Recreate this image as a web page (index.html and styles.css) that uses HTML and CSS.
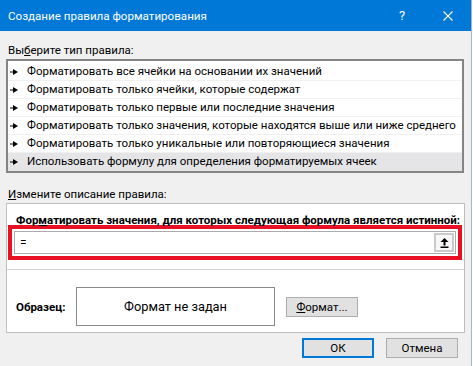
FILE: index.html
```html
<!DOCTYPE html>
<html lang="ru">
<head>
<meta charset="utf-8">
<link rel="stylesheet" href="styles.css">
</head>
<body>
<div class="dialog">
  <div class="titlebar">
    <div class="title">Создание правила форматирования</div>
    <div class="capbtn help">?</div>
    <div class="capbtn close">
      <svg width="10" height="10" viewBox="0 0 10 10"><path d="M0.5 0.5L9.5 9.5M9.5 0.5L0.5 9.5" stroke="#fff" stroke-width="1.1" fill="none"/></svg>
    </div>
  </div>
  <div class="content">
    <div class="label">Вы<u>б</u>ерите тип правила:</div>
    <div class="listbox">
      <div class="row"><svg class="arr" width="8" height="6" viewBox="0 0 8 6"><path d="M0 2.5h3v1H0z M3 0l5 3L3 6z"/></svg>Форматировать все ячейки на основании их значений</div>
      <div class="row"><svg class="arr" width="8" height="6" viewBox="0 0 8 6"><path d="M0 2.5h3v1H0z M3 0l5 3L3 6z"/></svg>Форматировать только ячейки, которые содержат</div>
      <div class="row"><svg class="arr" width="8" height="6" viewBox="0 0 8 6"><path d="M0 2.5h3v1H0z M3 0l5 3L3 6z"/></svg>Форматировать только первые или последние значения</div>
      <div class="row"><svg class="arr" width="8" height="6" viewBox="0 0 8 6"><path d="M0 2.5h3v1H0z M3 0l5 3L3 6z"/></svg>Форматировать только значения, которые находятся выше или ниже среднего</div>
      <div class="row"><svg class="arr" width="8" height="6" viewBox="0 0 8 6"><path d="M0 2.5h3v1H0z M3 0l5 3L3 6z"/></svg>Форматировать только уникальные или повторяющиеся значения</div>
      <div class="row selected"><svg class="arr" width="8" height="6" viewBox="0 0 8 6"><path d="M0 2.5h3v1H0z M3 0l5 3L3 6z"/></svg>Использовать формулу для определения форматируемых ячеек</div>
    </div>
    <div class="label label2"><u>И</u>змените описание правила:</div>
    <div class="panel">
      <div class="heading">Фор<u>м</u>атировать значения, для которых следующая формула является истинной:</div>
      <div class="redbox">
        <div class="input">
          <span class="value">=</span>
          <div class="refbtn">
            <svg width="9" height="10" viewBox="0 0 9 10"><path d="M4.5 0L8.5 4H5.5V7.5H3.5V4H0.5Z" fill="#000"/><rect x="0.5" y="8.5" width="8" height="1.5" fill="#000"/></svg>
          </div>
        </div>
      </div>
      <div class="sep"></div>
      <div class="sample">
        <div class="samplelabel">Образец:</div>
        <div class="preview">Формат не задан</div>
        <div class="btn fmtbtn"><u>Ф</u>ормат...</div>
      </div>
    </div>
    <div class="buttons">
      <div class="btn ok">ОК</div>
      <div class="btn cancel">Отмена</div>
    </div>
  </div>
</div>
</body>
</html>
```

FILE: styles.css
```css
html, body {
  margin: 0;
  padding: 0;
  background: #ffffff;
}
body {
  font-family: Roboto, "Noto Sans", sans-serif;
  font-size: 11.5px;
  color: #000;
}
u {
  text-decoration: underline;
  text-underline-offset: 1px;
}
.dialog {
  width: 472px;
  height: 366px;
  box-sizing: border-box;
  background: #f0f0f0;
  border-right: 1px solid #9fb7d2;
}
.titlebar {
  height: 31px;
  background: #0078d7;
  color: #fff;
  display: flex;
  align-items: center;
}
.title {
  flex: 1;
  padding-left: 8px;
  font-size: 11.6px;
}
.capbtn {
  width: 46px;
  height: 31px;
  display: flex;
  align-items: center;
  justify-content: center;
}
.help {
  font-size: 13px;
}
.content {
  padding-left: 6px;
  width: 459px;
}
.label {
  padding: 11px 0 0 2px;
  line-height: 16px;
  height: 16px;
  margin-bottom: 1px;
}
.label2 {
  padding-top: 13px;
}
.listbox {
  width: 458px;
  box-sizing: border-box;
  border: 2px solid #858585;
  background: #fff;
  padding-top: 2px;
}
.row {
  height: 18px;
  box-sizing: border-box;
  border-bottom: 1px solid #f0f0f0;
  display: flex;
  align-items: center;
  line-height: 17px;
  padding-left: 1px;
  white-space: nowrap;
}
.row.selected {
  background: #e5e5e8;
  border-bottom-color: #e5e5e8;
}
.arr {
  margin: 0 9px 0 1px;
  flex: none;
}
.panel {
  width: 459px;
  height: 130px;
  box-sizing: border-box;
  border: 1px solid #bfbfbf;
  background: #fff;
  padding-left: 1px;
}
.heading {
  font-weight: bold;
  padding: 11px 0 0 8px;
  line-height: 10px;
  height: 10px;
  white-space: nowrap;
}
.redbox {
  width: 454px;
  height: 35px;
  box-sizing: border-box;
  border: 4px solid #e81123;
  padding: 2px;
}
.input {
  height: 23px;
  box-sizing: border-box;
  border: 1px solid #ababab;
  display: flex;
  align-items: center;
  justify-content: space-between;
  padding: 0 1px 0 5px;
}
.value {
  font-size: 12px;
}
.refbtn {
  width: 20px;
  height: 19px;
  box-sizing: border-box;
  border: 2px solid #cacaca;
  background: #f7f7f7;
  display: flex;
  align-items: center;
  justify-content: center;
}
.sep {
  margin-top: 9px;
  height: 1px;
  background: #d4d4d4;
  margin-left: -1px;
}
.sample {
  display: flex;
  align-items: center;
  margin-top: 17px;
  padding-left: 8px;
}
.samplelabel {
  width: 60px;
  font-weight: bold;
}
.preview {
  width: 199px;
  height: 39px;
  box-sizing: border-box;
  border: 1px solid #8a8a8a;
  display: flex;
  align-items: center;
  justify-content: center;
  font-size: 12.8px;
}
.btn {
  width: 72px;
  height: 20px;
  box-sizing: border-box;
  background: #e1e1e1;
  border: 1px solid #adadad;
  display: flex;
  align-items: center;
  justify-content: center;
}
.fmtbtn {
  margin-left: 11px;
}
.buttons {
  display: flex;
  justify-content: flex-end;
  gap: 12px;
  margin-top: 5px;
  padding-right: 7px;
}
.ok {
  border: 2px solid #0078d7;
}
```
